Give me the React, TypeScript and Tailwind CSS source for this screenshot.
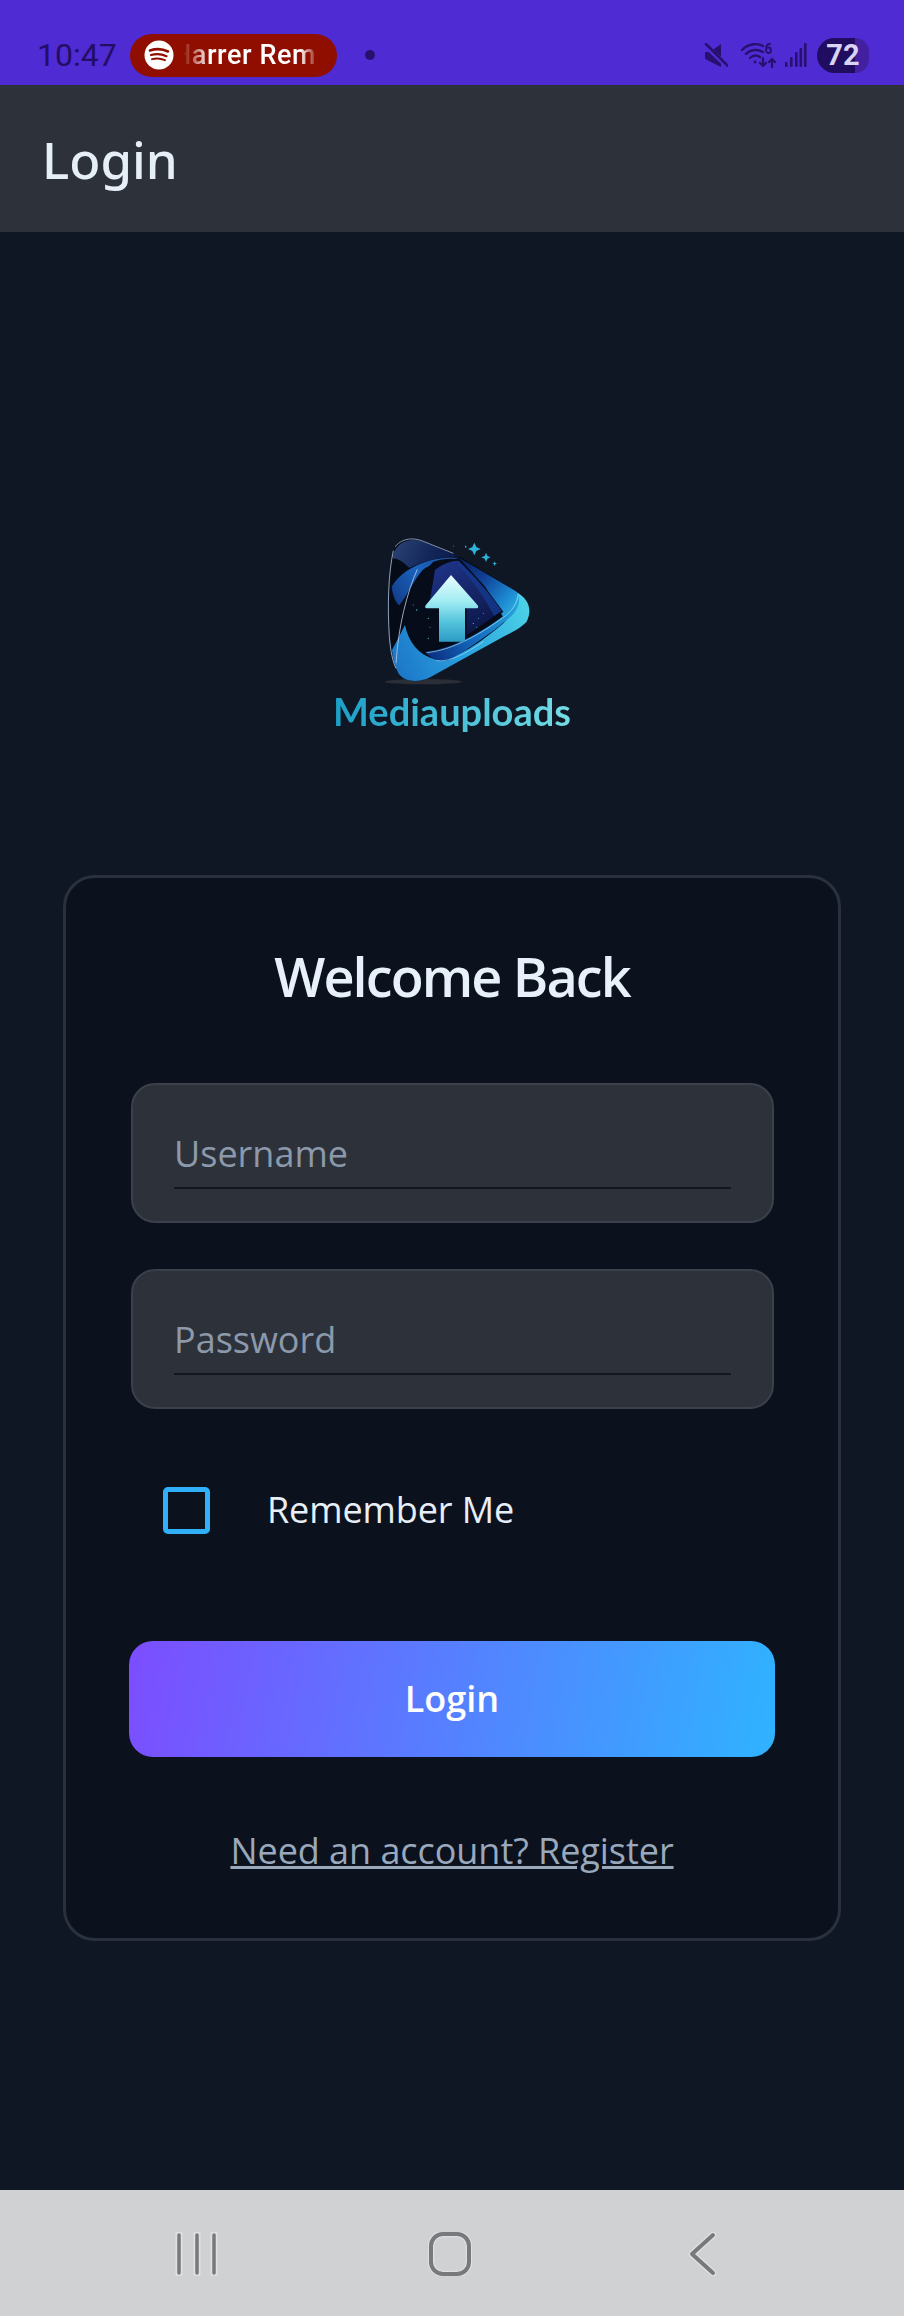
import React from "react";

const openSans = "font-['Open_Sans',sans-serif]";

function Logo() {
  return (
    <svg viewBox="-24 0 540 480" width={180} height={160} className="block shrink-0">
      <defs>
        <linearGradient id="top" gradientUnits="userSpaceOnUse" x1="80" y1="30" x2="230" y2="100">
          <stop offset="0" stopColor="#2b4172" />
          <stop offset="0.6" stopColor="#14285c" />
          <stop offset="1" stopColor="#0d1d4e" />
        </linearGradient>
        <linearGradient id="swoosh" gradientUnits="userSpaceOnUse" x1="70" y1="220" x2="260" y2="85">
          <stop offset="0" stopColor="#123c88" />
          <stop offset="0.5" stopColor="#1b63bf" />
          <stop offset="1" stopColor="#1c4d9e" />
        </linearGradient>
        <linearGradient id="right" gradientUnits="userSpaceOnUse" x1="265" y1="85" x2="445" y2="240">
          <stop offset="0" stopColor="#0b1f5c" />
          <stop offset="0.4" stopColor="#103f94" />
          <stop offset="0.75" stopColor="#1b82cc" />
          <stop offset="1" stopColor="#2bb1e2" />
        </linearGradient>
        <linearGradient id="bottom" gradientUnits="userSpaceOnUse" x1="80" y1="430" x2="470" y2="240">
          <stop offset="0" stopColor="#1c76c8" />
          <stop offset="0.5" stopColor="#2aa3e0" />
          <stop offset="1" stopColor="#4bd0e6" />
        </linearGradient>
        <linearGradient id="ribbon" gradientUnits="userSpaceOnUse" x1="175" y1="380" x2="445" y2="220">
          <stop offset="0" stopColor="#0b2f80" />
          <stop offset="0.45" stopColor="#1467bd" />
          <stop offset="1" stopColor="#26a8e0" />
        </linearGradient>
        <linearGradient id="inner" gradientUnits="userSpaceOnUse" x1="230" y1="100" x2="340" y2="300">
          <stop offset="0" stopColor="#1e3284" />
          <stop offset="1" stopColor="#0c1748" />
        </linearGradient>
        <linearGradient id="arrow" x1="0" y1="0" x2="0" y2="1">
          <stop offset="0" stopColor="#eafdff" />
          <stop offset="0.4" stopColor="#a0ecf2" />
          <stop offset="0.7" stopColor="#55c4dc" />
          <stop offset="1" stopColor="#2c9cc6" />
        </linearGradient>
      </defs>
      <ellipse cx="160" cy="455" rx="116" ry="8" fill="#2a2e36" />
      <path d="M75 50C100 22 130 24 155 32L270 80L440 185C470 205 490 235 470 275C450 295 430 305 400 320L175 445C150 455 105 460 85 430C70 400 60 350 55 250C54 180 58 90 75 50Z" fill="#060b18" />
      <path d="M68 85C72 45 105 22 155 32L270 80C230 78 170 88 118 114C100 95 82 85 68 85Z" fill="url(#top)" />
      <path d="M65 170C85 135 125 108 175 93C205 84 240 80 268 84C225 92 180 102 158 120C135 145 115 190 88 226C75 215 68 195 65 170Z" fill="url(#swoosh)" />
      <path d="M265 82L440 185C448 192 450 205 446 215C430 240 420 250 400 262L345 170Z" fill="url(#right)" />
      <path d="M105 285C115 335 145 375 195 388C250 395 330 340 400 280C425 255 440 225 445 190C470 205 490 235 470 275C450 295 430 305 400 320L175 445C150 455 105 460 85 430C75 410 68 385 66 360C80 335 92 310 105 285Z" fill="url(#bottom)" />
      <path d="M165 365C235 362 330 310 400 258C425 240 440 215 445 190C452 215 445 240 420 262C370 305 290 362 235 391C205 397 182 385 165 365Z" fill="url(#ribbon)" />
      <path d="M445 190C442 220 425 245 400 262C335 310 250 360 170 368" fill="none" stroke="#b8eef6" strokeWidth="2.500" opacity="0.75" />
      <path d="M198 392C240 396 280 375 340 335" fill="none" stroke="#d0f4fa" strokeWidth="2" opacity="0.7" />
      <path d="M190 95C215 86 245 84 265 88L340 165L400 245C350 285 260 345 165 365C135 345 110 300 105 265C104 225 150 130 190 95Z" fill="#060c1a" />
      <path d="M195 120C220 100 245 92 265 92C310 135 360 190 395 243L290 315L290 235L180 210Z" fill="url(#inner)" />
      <path d="M265 92C310 135 360 190 395 243L372 258C345 205 305 145 262 105Z" fill="#143a8e" opacity="0.8" />
      <path d="M142 118C110 190 85 290 78 400" fill="none" stroke="#b4c8e2" strokeWidth="2.500" />
      <path d="M70 62C55 130 52 230 58 320C62 365 68 395 78 415" fill="none" stroke="#aabfdc" strokeWidth="2.500" />
      <path d="M75 50C100 22 130 24 155 32L250 70" fill="none" stroke="#98a8c4" strokeWidth="2.500" />
      <path d="M243 135L323 226Q327 235 320 235L285 235L285 335L207 335L207 235L170 235Q163 235 167 226Z" fill="url(#arrow)" />
      <path d="M313 38L319 51L332 57L319 63L313 76L307 63L294 57L307 51Z" fill="#2fb2d8" />
      <path d="M348 68L352 78L362 82L352 86L348 96L344 86L334 82L344 78Z" fill="#2fb2d8" />
      <path d="M374 94L376 99L381 101L376 103L374 108L372 103L367 101L372 99Z" fill="#2fb2d8" />
      <circle cx="287" cy="50" r="2.500" fill="#2fb2d8" />
      <circle cx="250" cy="48" r="1.500" fill="#2fb2d8" />
      <circle cx="140" cy="240" r="2" fill="#3cc0dc" />
      <circle cx="130" cy="225" r="1.500" fill="#3cc0dc" />
      <circle cx="175" cy="265" r="2" fill="#3cc0dc" />
      <circle cx="180" cy="292" r="1.500" fill="#3cc0dc" />
      <circle cx="175" cy="325" r="2" fill="#3cc0dc" />
      <circle cx="310" cy="280" r="2" fill="#3cc0dc" />
      <circle cx="325" cy="265" r="1.500" fill="#3cc0dc" />
      <circle cx="340" cy="250" r="1.500" fill="#3cc0dc" />
      <circle cx="320" cy="292" r="1.500" fill="#3cc0dc" />
    </svg>
  );
}

function SpotifyIcon() {
  return (
    <svg viewBox="0 0 30 30" width={30} height={30} className="shrink-0">
      <circle cx="15" cy="15" r="14.500" fill="#fff" />
      <path d="M6 10.500C12 8.500 19 9 24 11.500" fill="none" stroke="#8f0e00" strokeWidth="2.600" strokeLinecap="round" />
      <path d="M7 15C12 13.500 18 14 22.500 16.200" fill="none" stroke="#8f0e00" strokeWidth="2.200" strokeLinecap="round" />
      <path d="M8 19.200C12.500 18 17 18.400 21 20.200" fill="none" stroke="#8f0e00" strokeWidth="1.900" strokeLinecap="round" />
    </svg>
  );
}

function MuteIcon() {
  return (
    <svg viewBox="0 0 24 24" width={24} height={24} className="shrink-0" fill="#27116e">
      <path d="M1 9H6L17 1V24L1 16Z" />
      <path d="M1 2L24 24" stroke="#4f2bd3" strokeWidth="5" />
      <path d="M2 1L24 23" stroke="#27116e" strokeWidth="2.500" strokeLinecap="round" />
    </svg>
  );
}

function WifiIcon() {
  return (
    <svg viewBox="0 0 36 26" width={36} height={26} className="shrink-0" fill="none" stroke="#27116e" strokeLinecap="round">
      <path d="M1 8C8 1 17 1 22 4" strokeWidth="2.400" />
      <path d="M5 12C10 7 17 7 22 10" strokeWidth="2.400" />
      <path d="M9 16C12 13 16 13 19 15" strokeWidth="2.400" />
      <circle cx="14" cy="20" r="1.400" fill="#27116e" stroke="none" />
      <path d="M22 16V24M19 21L22 24L25 21" strokeWidth="2.200" />
      <path d="M31 25V17M28 20L31 17L34 20" strokeWidth="2.200" />
      <path d="M29 2C26 2 25 4 25 7C25 10 26 11 27.500 11C29 11 30 10 30 8C30 6.500 29 5.500 27.500 5.500C26.500 5.500 25.500 6 25 7" strokeWidth="1.800" />
    </svg>
  );
}

function SignalIcon() {
  return (
    <svg viewBox="0 0 22 24" width={22} height={24} className="shrink-0" fill="#27116e">
      <rect x="0" y="19" width="2.600" height="5" rx="1" />
      <rect x="5" y="14" width="2.600" height="10" rx="1" />
      <rect x="10" y="9" width="2.600" height="15" rx="1" />
      <rect x="14.500" y="5" width="2.600" height="19" rx="1" />
      <rect x="19" y="0" width="2.600" height="24" rx="1" />
    </svg>
  );
}

function StatusBar() {
  return (
    <div className="flex h-[85px] shrink-0 items-center bg-[#4f2bd3] pl-[37px] pr-[35px] pt-[25px]">
      <span className="w-[79px] whitespace-nowrap font-['Roboto',sans-serif] text-[32px] leading-[40px] text-[#230e66]">10:47</span>
      <div className="ml-[14px] flex h-[43px] w-[207px] items-center rounded-full bg-[#8f0e00] pl-[14px]">
        <SpotifyIcon />
        <div className="ml-[-2px] w-[150px] [mask-image:linear-gradient(to_right,transparent_0,transparent_11px,#000_38px,#000_128px,transparent_146px)]">
          <span className="block whitespace-nowrap font-['Roboto',sans-serif] text-[27px] font-medium leading-[30px] tracking-[0.6px] text-[#fff]">Harrer Rem</span>
        </div>
      </div>
      <span className="ml-[28px] size-[10px] rounded-full bg-[#27116e]" />
      <div className="ml-auto flex items-center">
        <MuteIcon />
        <div className="ml-[13px] flex items-center gap-[8px]">
          <WifiIcon />
          <SignalIcon />
        </div>
        <div className="relative ml-[10px] flex h-[35px] w-[52px]">
          <div className="h-full w-[38px] rounded-l-full bg-[#200d5f]" />
          <div className="h-full w-[14px] rounded-r-full bg-[#42209f]" />
          <span className="absolute inset-0 text-center font-['Roboto',sans-serif] text-[29px] font-bold leading-[35px] text-[#d9d3f5]">72</span>
        </div>
      </div>
    </div>
  );
}

function Field({ label }: { label: string }) {
  return (
    <div className="flex h-[140px] flex-col rounded-[24px] border-2 border-[#3b404b] bg-[#2d313a] px-[41px]">
      <div className="flex h-[104px] items-end border-b-2 border-[#14171d] pb-[5px]">
        <span className={`${openSans} text-[36px] leading-[56px] text-[#8c99aa]`}>{label}</span>
      </div>
    </div>
  );
}

function NavBar() {
  return (
    <div className="flex h-[126px] shrink-0 items-start bg-[#d0d1d3] pl-[175px] pt-[42px]">
      <svg viewBox="0 0 44 44" width={44} height={44} fill="none" strokeLinecap="round">
        <path d="M4 2V42M22 2V42M39 2V42" stroke="#dfe0e2" strokeWidth="7" />
        <path d="M4 3V41M22 3V41M39 3V41" stroke="#77797c" strokeWidth="3.500" />
      </svg>
      <svg viewBox="0 0 44 44" width={44} height={44} fill="none" className="ml-[209px]">
        <rect x="3" y="2" width="38" height="40" rx="12" stroke="#dfe0e2" strokeWidth="6.500" />
        <rect x="3" y="2" width="38" height="40" rx="12" stroke="#77797c" strokeWidth="4" />
      </svg>
      <svg viewBox="0 0 30 44" width={30} height={44} fill="none" strokeLinecap="round" strokeLinejoin="round" className="ml-[216px]">
        <path d="M25 3L4 22L25 41" stroke="#dfe0e2" strokeWidth="6.500" />
        <path d="M25 3L4 22L25 41" stroke="#77797c" strokeWidth="4" />
      </svg>
    </div>
  );
}

export default function App() {
  return (
    <div className="flex h-[2316px] w-[904px] flex-col overflow-hidden bg-[#0f1724]">
      <StatusBar />
      <div className="flex h-[147px] shrink-0 items-center bg-[#2d323a] pl-[42px]">
        <h1 className="font-['Noto_Sans',sans-serif] text-[51px] font-medium leading-[60px] text-[#e6eef7]">Login</h1>
      </div>
      <main className="flex min-h-0 flex-1 flex-col items-center pt-[298px]">
        <Logo />
        <div className="mt-[-2px] bg-[linear-gradient(90deg,#1a9fc8,#74dde6)] bg-clip-text font-['Lato',sans-serif] text-[38px] font-bold leading-[46px] text-transparent">Mediauploads</div>
        <section className="mt-[141px] flex h-[1066px] w-[778px] flex-col rounded-[32px] border-[3px] border-[#2a303d] bg-[#0b121e] px-[65px] pt-[62px]">
          <h2 className={`${openSans} text-center text-[54px] font-semibold leading-[72px] tracking-[-1.9px] text-[#e8f0f9]`}>Welcome Back</h2>
          <div className="ml-0 mr-[-1px] mt-[71px] flex flex-col gap-[46px]">
            <Field label="Username" />
            <Field label="Password" />
          </div>
          <div className="mt-[77px] flex h-[48px] items-center pl-[32px]">
            <span className="size-[47px] rounded-[5px] border-[5px] border-[#2fb0f8]" />
            <span className={`${openSans} ml-[57px] text-[36px] leading-[48px] tracking-[-0.1px] text-[#e8eef6]`}>Remember Me</span>
          </div>
          <button className={`${openSans} mx-[-2px] mt-[107px] h-[116px] rounded-[24px] bg-[linear-gradient(100deg,#7c4dff,#2fb3ff)] text-[36px] font-semibold text-white`}>Login</button>
          <a className={`${openSans} mt-[70px] text-center text-[36px] leading-[48px] tracking-[-0.05px] text-[#9aa8bc] underline`}>Need an account? Register</a>
        </section>
      </main>
      <NavBar />
    </div>
  );
}
